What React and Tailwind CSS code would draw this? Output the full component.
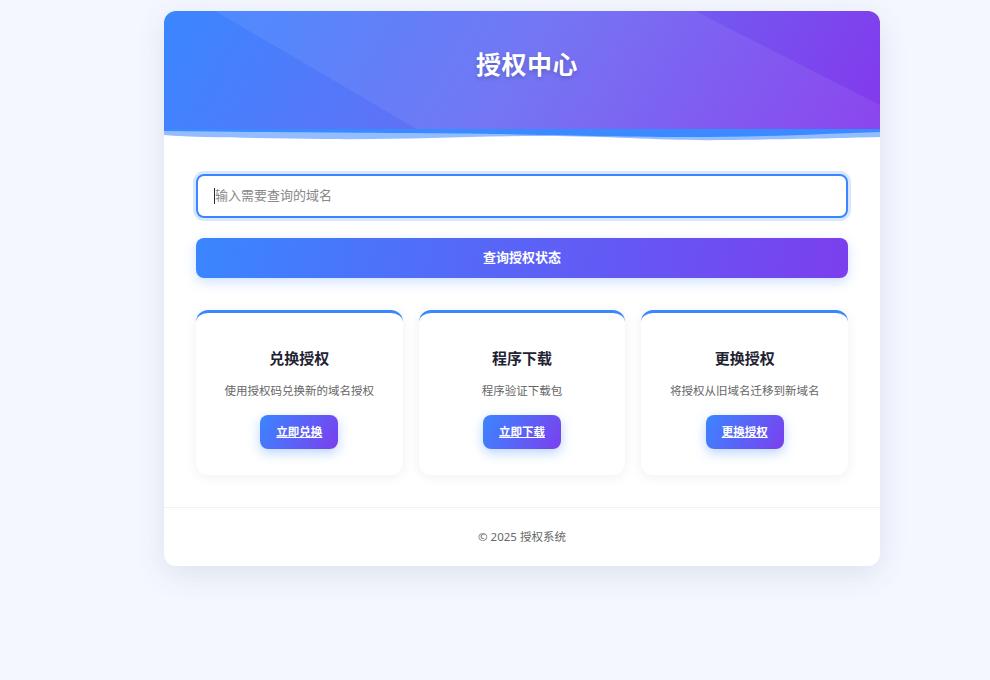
import React from 'react'

const FONT = { fontFamily: '"Noto Sans", "Noto Sans CJK SC", sans-serif' }

const CARDS = [
  { title: '兑换授权', desc: '使用授权码兑换新的域名授权', action: '立即兑换' },
  { title: '程序下载', desc: '程序验证下载包', action: '立即下载' },
  { title: '更换授权', desc: '将授权从旧域名迁移到新域名', action: '更换授权' },
]

export default function App() {
  return (
    <div className="min-h-screen bg-[#f4f7fe] pt-[11px]" style={FONT}>
      <div className="ml-[164px] w-[716px] bg-white rounded-xl shadow-[0_8px_30px_rgba(60,70,120,0.12)]">
        {/* Header */}
        <header className="relative h-[120px] rounded-t-xl bg-[linear-gradient(120deg,#3a86ff_0%,#6a6cf4_50%,#8338ec_100%)] flex items-center justify-center pb-3 pl-[10px]">
          <svg className="absolute inset-0 w-full h-full rounded-t-xl" viewBox="0 0 716 120" preserveAspectRatio="none">
            <polygon points="51,0 531,0 716,94 716,120 256,120" fill="#ffffff" fillOpacity="0.07" />
          </svg>
          <h1 className="relative text-[25px] font-bold text-white tracking-[0.5px] [text-shadow:0_2px_4px_rgba(0,0,0,0.2)]">
            授权中心
          </h1>
          <svg className="absolute left-0 top-[118px] w-full h-[14px]" viewBox="0 0 716 14" preserveAspectRatio="none">
            <path
              d="M0 0 L716 0 L716 8 C680 9 640 10 560 11 C500 12 450 7 380 7 C300 7 240 11 160 10 C100 9 40 9 0 6 Z"
              fill="#3a86ff"
              fillOpacity="0.55"
            />
            <path
              d="M0 0 L716 0 L716 3 C660 5 600 8 520 8 C450 8 400 6 330 5 C250 4 150 4 0 2 Z"
              fill="#3a8bff"
            />
          </svg>
        </header>

        {/* Body */}
        <div className="px-8 pt-[43px] pb-8">
          <div className="h-11 rounded-lg border-2 border-[#3a86ff] ring-[3px] ring-[#3a86ff]/20 flex items-center px-4">
            <span className="w-px h-4 bg-gray-800" />
            <span className="text-[13px] text-[#888]">输入需要查询的域名</span>
          </div>

          <button className="mt-5 w-full h-10 rounded-lg bg-[linear-gradient(100deg,#3a86ff,#7b3fee)] text-white text-[13px] font-bold shadow-[0_4px_12px_rgba(58,134,255,0.25)]">
            查询授权状态
          </button>

          <div className="mt-8 grid grid-cols-3 gap-4">
            {CARDS.map((c) => (
              <div
                key={c.title}
                className="h-[165px] rounded-xl border-t-[3px] border-[#3a86ff] bg-white shadow-[0_2px_12px_rgba(60,70,120,0.08)] flex flex-col items-center pt-[33px]"
              >
                <h3 className="text-[15px] font-bold text-[#1f2333] leading-6">{c.title}</h3>
                <p className="mt-[11px] text-[11.5px] text-[#666] leading-5">{c.desc}</p>
                <button className="mt-[14px] h-[34px] px-4 rounded-lg bg-[linear-gradient(120deg,#3a86ff,#7b3fee)] text-white text-[11.5px] font-bold underline shadow-[0_4px_12px_rgba(58,134,255,0.35)]">
                  {c.action}
                </button>
              </div>
            ))}
          </div>
        </div>

        {/* Footer */}
        <footer className="border-t border-[#f0f2f5] h-[59px] flex items-center justify-center">
          <p className="text-[11.5px] text-[#666]">© 2025 授权系统</p>
        </footer>
      </div>
    </div>
  )
}
